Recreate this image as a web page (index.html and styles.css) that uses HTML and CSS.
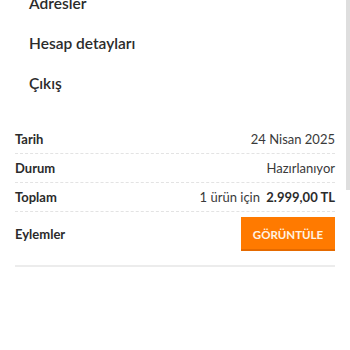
FILE: index.html
```html
<!DOCTYPE html>
<html lang="tr">
<head>
<meta charset="utf-8">
<link rel="stylesheet" href="styles.css">
</head>
<body>
<div class="page">
  <ul class="menu">
    <li class="menu-item">Adresler</li>
    <li class="menu-item">Hesap detayları</li>
    <li class="menu-item">Çıkış</li>
  </ul>
  <div class="order">
    <div class="row">
      <span class="label">Tarih</span>
      <span class="value">24 Nisan 2025</span>
    </div>
    <div class="row">
      <span class="label">Durum</span>
      <span class="value">Hazırlanıyor</span>
    </div>
    <div class="row">
      <span class="label">Toplam</span>
      <span class="value">1 ürün için <strong class="total">2.999,00 TL</strong></span>
    </div>
    <div class="row row-actions">
      <span class="label">Eylemler</span>
      <button class="btn">GÖRÜNTÜLE</button>
    </div>
  </div>
</div>
<div class="scrollbar"></div>
</body>
</html>
```
FILE: styles.css
```css
html, body {
  margin: 0;
  padding: 0;
  background: #fff;
}
body {
  font-family: "Lato", "Liberation Sans", sans-serif;
  color: #2b2b2b;
  overflow: hidden;
  width: 350px;
  height: 350px;
}
.page {
  padding: 0 15px;
}
.menu {
  list-style: none;
  margin: -17px 0 0 0;
  padding: 0 0 0 14px;
}
.menu-item {
  font-size: 15.5px;
  font-weight: 600;
  line-height: 40px;
  height: 40px;
  color: #2b2b2b;
}
.order {
  margin-top: 22px;
}
.row {
  display: flex;
  justify-content: space-between;
  align-items: center;
  height: 28px;
  border-bottom: 1px dashed #e3e3e3;
  font-size: 13px;
}
.label {
  font-weight: 700;
  color: #2b2b2b;
}
.value {
  color: #3a3a3a;
  font-size: 13px;
}
.total {
  font-weight: 700;
  color: #2b2b2b;
  margin-left: 3px;
}
.row-actions {
  height: auto;
  padding: 5px 0 6px;
  border-bottom: none;
}
.btn {
  width: 94px;
  height: 34px;
  border: none;
  background: #ff7a00;
  color: #fff3e4;
  font-family: inherit;
  font-size: 11.5px;
  font-weight: 700;
  box-shadow: inset 0 -2px 0 #e56a00;
  padding: 0;
}
.order::after {
  content: "";
  display: block;
  margin-top: 8px;
  border-top: 2px solid #ececec;
}
.scrollbar {
  position: fixed;
  top: 0;
  right: 0;
  width: 4px;
  height: 190px;
  background: #dedede;
}
```
